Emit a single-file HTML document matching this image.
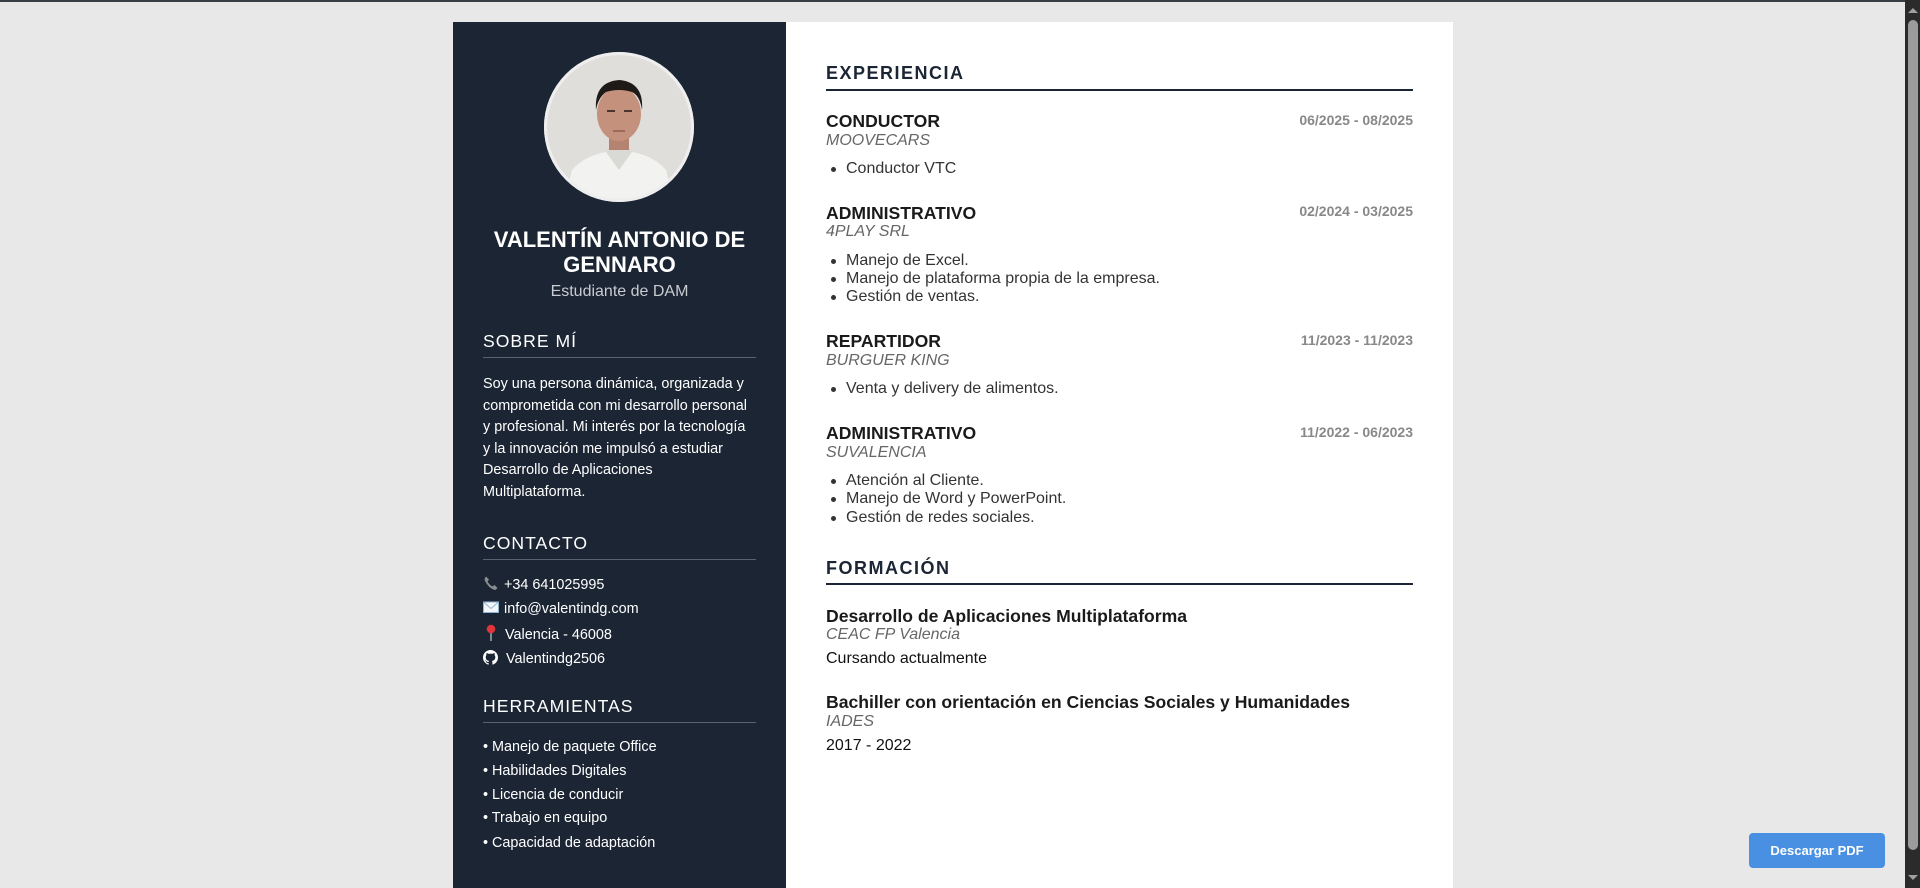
<!DOCTYPE html>
<html><head><meta charset="utf-8"><style>
*{margin:0;padding:0;box-sizing:border-box}
html,body{width:1920px;height:888px;overflow:hidden;background:#e8e8e8;font-family:"Liberation Sans",Arial,sans-serif}
.a{position:absolute;white-space:nowrap}
#top{position:absolute;left:0;top:0;width:1905px;height:2px;background:#3a3f44}
#side{position:absolute;left:453px;top:22px;width:333px;height:866px;background:#1b2533}
#main{position:absolute;left:786px;top:22px;width:667px;height:866px;background:#fff}
.sc{color:#fff;text-align:center;left:453px;width:333px}
.sh{left:483px;font-size:17.6px;letter-spacing:1px;color:#fff;line-height:22px}
.sl{position:absolute;left:483px;width:273px;height:1px;background:#5a6270}
.si{left:483px;font-size:14.4px;color:#fff;line-height:20px}
.mh{left:826px;font-size:18px;font-weight:bold;letter-spacing:1.5px;color:#1b2533;line-height:22px}
.ml{position:absolute;left:826px;width:587px;height:2px;background:#1b2533}
.t{left:826px;font-size:17.6px;font-weight:bold;color:#1a1a1a;line-height:22px}
.c{left:826px;font-size:16px;font-style:italic;color:#666;line-height:20px}
.d{right:507px;font-size:14px;font-weight:bold;color:#888;line-height:16px}
.b{left:846px;font-size:16px;color:#333;line-height:18px}
.b:before{content:"";position:absolute;left:-15px;top:7px;width:5px;height:5px;border-radius:50%;background:#333}
.p{left:826px;font-size:16px;color:#111;line-height:20px}
</style></head><body>
<div id="top"></div>
<div id="side"></div>
<div id="main"></div>

<svg class="a" style="left:544px;top:52px" width="150" height="150" viewBox="0 0 150 150">
<defs><clipPath id="cp"><circle cx="75" cy="75" r="72"/></clipPath></defs>
<circle cx="75" cy="75" r="75" fill="#eeeeee"/>
<g clip-path="url(#cp)">
<rect width="150" height="150" fill="#dfdedb"/>
<path d="M20 150 L28 118 Q40 104 62 100 L88 100 Q110 104 122 118 L130 150Z" fill="#f2f2f0"/>
<path d="M62 100 L75 118 L88 100 L84 94 L66 94Z" fill="#d9d9d6"/>
<rect x="65" y="82" width="20" height="16" fill="#b58470"/>
<ellipse cx="75" cy="62" rx="22" ry="27" fill="#c4927c"/>
<path d="M52 58 Q50 30 75 28 Q100 30 98 58 Q96 44 88 40 Q75 36 62 40 Q54 46 52 58Z" fill="#1f1a18"/>
<rect x="63" y="58" width="8" height="2" fill="#4a3430"/><rect x="80" y="58" width="8" height="2" fill="#4a3430"/>
<rect x="69" y="78" width="12" height="2" fill="#9a6a5c"/>
</g>
<circle cx="75" cy="75" r="73.5" fill="none" stroke="#eeeeee" stroke-width="3"/>
</svg>

<div class="a sc" style="top:226.5px;font-size:22px;font-weight:bold;line-height:25.7px">VALENTÍN ANTONIO DE</div>
<div class="a sc" style="top:252.2px;font-size:22px;font-weight:bold;line-height:25.7px">GENNARO</div>
<div class="a sc" style="top:282px;font-size:16px;color:#c9ccd1;line-height:20px">Estudiante de DAM</div>

<div class="a sh" style="top:330px">SOBRE MÍ</div>
<div class="sl" style="top:357px"></div>
<div class="a" style="left:483px;top:374px;width:273px;white-space:normal;font-size:14.4px;line-height:21.6px;color:#fff">Soy una persona dinámica, organizada y comprometida con mi desarrollo personal y profesional. Mi interés por la tecnología y la innovación me impulsó a estudiar Desarrollo de Aplicaciones Multiplataforma.</div>

<div class="a sh" style="top:532px">CONTACTO</div>
<div class="sl" style="top:559px"></div>
<svg class="a" style="left:483px;top:575px" width="16" height="16" viewBox="0 0 16 16"><path d="M3 1.5 L6 4.5 L4.5 6.5 Q6.5 10 9.5 11.5 L11.5 10 L14.5 13 L12.5 15 Q6 14 1.5 5 Q1.5 3 3 1.5Z" fill="#8a8e93"/></svg>
<div class="a si" style="top:574.5px;left:504px">+34 641025995</div>
<svg class="a" style="left:483px;top:600px" width="16" height="14" viewBox="0 0 16 14"><rect x="0.5" y="2" width="15" height="10.5" fill="#f4f6f8" stroke="#8fb4d6"/><path d="M0.5 2 L8 8.5 L15.5 2" fill="none" stroke="#8fb4d6"/></svg>
<div class="a si" style="top:599px;left:504px">info@valentindg.com</div>
<svg class="a" style="left:484px;top:624px" width="14" height="18" viewBox="0 0 14 18"><rect x="6.3" y="6" width="1.4" height="11" fill="#aab2bb"/><circle cx="7" cy="5" r="4.3" fill="#e0363a"/></svg>
<div class="a si" style="top:624.5px;left:505px">Valencia - 46008</div>
<svg class="a" style="left:483px;top:650px" width="15" height="15" viewBox="0 0 16 16"><path fill="#fff" d="M8 0C3.58 0 0 3.58 0 8c0 3.540 2.29 6.53 5.470 7.59.4.07.55-.17.55-.38v-1.33c-2.230.48-2.7-1.07-2.7-1.07-.36-.92-.89-1.17-.89-1.17-.73-.5.06-.49.06-.49.8.06 1.230.83 1.230.83.71 1.220 1.870.87 2.330.66.07-.52.28-.87.51-1.07-1.78-.2-3.64-.89-3.64-3.95 0-.87.31-1.59.82-2.15-.08-.2-.36-1.020.08-2.120 0 0 .67-.21 2.2.82a7.6 7.6 0 0 1 4 0c1.53-1.04 2.2-.82 2.2-.82.44 1.1.16 1.92.08 2.12.51.56.82 1.27.82 2.15 0 3.07-1.87 3.75-3.65 3.95.29.25.54.73.54 1.48v2.2c0 .21.15.46.55.38A8.01 8.01 0 0 0 16 8c0-4.42-3.58-8-8-8z"/></svg>
<div class="a si" style="top:649px;left:506px">Valentindg2506</div>

<div class="a sh" style="top:695px">HERRAMIENTAS</div>
<div class="sl" style="top:722px"></div>
<div class="a si" style="top:737px">• Manejo de paquete Office</div>
<div class="a si" style="top:760.5px">• Habilidades Digitales</div>
<div class="a si" style="top:785px">• Licencia de conducir</div>
<div class="a si" style="top:808.3px">• Trabajo en equipo</div>
<div class="a si" style="top:832.7px">• Capacidad de adaptación</div>

<div class="a mh" style="top:62px">EXPERIENCIA</div>
<div class="ml" style="top:88.5px"></div>

<div class="a t" style="top:110px">CONDUCTOR</div>
<div class="a d" style="top:111.5px">06/2025 - 08/2025</div>
<div class="a c" style="top:130.6px">MOOVECARS</div>
<div class="a b" style="top:159.8px">Conductor VTC</div>

<div class="a t" style="top:201.8px">ADMINISTRATIVO</div>
<div class="a d" style="top:203.3px">02/2024 - 03/2025</div>
<div class="a c" style="top:222.4px">4PLAY SRL</div>
<div class="a b" style="top:251.6px">Manejo de Excel.</div>
<div class="a b" style="top:270px">Manejo de plataforma propia de la empresa.</div>
<div class="a b" style="top:288.3px">Gestión de ventas.</div>

<div class="a t" style="top:330.4px">REPARTIDOR</div>
<div class="a d" style="top:331.9px">11/2023 - 11/2023</div>
<div class="a c" style="top:351px">BURGUER KING</div>
<div class="a b" style="top:380.2px">Venta y delivery de alimentos.</div>

<div class="a t" style="top:422.3px">ADMINISTRATIVO</div>
<div class="a d" style="top:423.8px">11/2022 - 06/2023</div>
<div class="a c" style="top:442.8px">SUVALENCIA</div>
<div class="a b" style="top:472px">Atención al Cliente.</div>
<div class="a b" style="top:490.4px">Manejo de Word y PowerPoint.</div>
<div class="a b" style="top:508.7px">Gestión de redes sociales.</div>

<div class="a mh" style="top:557px">FORMACIÓN</div>
<div class="ml" style="top:583px"></div>

<div class="a t" style="top:604.5px">Desarrollo de Aplicaciones Multiplataforma</div>
<div class="a c" style="top:625.3px">CEAC FP Valencia</div>
<div class="a p" style="top:648.6px">Cursando actualmente</div>

<div class="a t" style="top:691.4px">Bachiller con orientación en Ciencias Sociales y Humanidades</div>
<div class="a c" style="top:712.2px">IADES</div>
<div class="a p" style="top:735.5px">2017 - 2022</div>

<div class="a" style="left:1749px;top:833px;width:136px;height:35px;background:#4a90e2;border-radius:4px;color:#fff;font-size:13px;font-weight:bold;text-align:center;line-height:35px">Descargar PDF</div>

<div class="a" style="left:1905px;top:0;width:15px;height:888px;background:#2b2b2b"></div>
<div class="a" style="left:1908px;top:20px;width:10px;height:830px;background:#9c9c9c;border-radius:5px"></div>
<div class="a" style="left:1908px;top:8px;width:0;height:0;border-left:5px solid transparent;border-right:5px solid transparent;border-bottom:5px solid #a0a0a0"></div>
<div class="a" style="left:1908px;top:875px;width:0;height:0;border-left:5px solid transparent;border-right:5px solid transparent;border-top:5px solid #a0a0a0"></div>
</body></html>
